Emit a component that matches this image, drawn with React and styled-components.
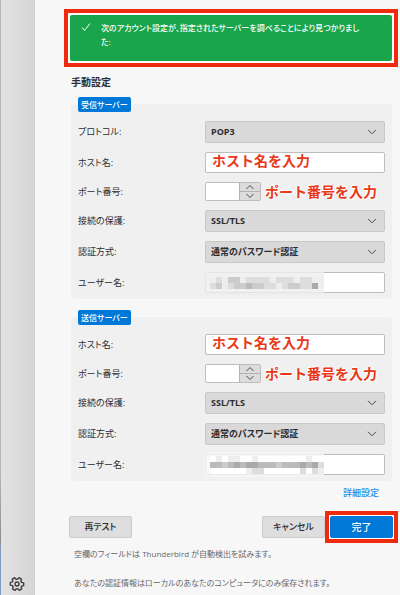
import React, {useId} from 'react';
import styled, {createGlobalStyle} from 'styled-components';

const GlobalStyle = createGlobalStyle`
    * {
        box-sizing: border-box;
    }
    body {
        margin: 0;
        background-color: #f7f7f7;
        color: #2c2c30;
        font-family: "Open Sans", "Noto Sans CJK JP", sans-serif;
        font-size: 9px;
        line-height: 14px;
        font-feature-settings: "palt";
    }
    button, input, select {
        font: inherit;
        font-feature-settings: inherit;
        color: inherit;
        margin: 0;
    }
`;

const Page = styled.div`
    display: flex;
    min-height: 100vh;
`;

const Sidebar = styled.aside`
    display: flex;
    flex-direction: column;
    justify-content: flex-end;
    align-items: center;
    flex: 0 0 35px;
    padding-bottom: 3px;
    border-right: 1px solid #cdcdcd;
    background:
        linear-gradient(#b4b4b4 80%, #8c8c8c 91%, #7f9cc0 92%) left / 1px 100% no-repeat,
        linear-gradient(to right, #e2e2e2, #d6d6d6);
`;

const IconButton = styled.button`
    display: flex;
    padding: 0;
    border: none;
    background: none;
    color: #3e3e42;
`;

const Content = styled.main`
    flex: 1;
    min-width: 0;
    padding: 9px 2px 0 29px;
`;

const Highlight = styled.div`
    padding: ${props => props.$tight ? "1px" : "2px"};
    border: 4px solid #ee2b0c;
    background-color: #fff;
`;

const Notice = styled.div`
    display: flex;
    gap: 10px;
    min-height: 46px;
    padding: 6px 8px 6px 11px;
    border-radius: 2px;
    background-color: #18a54b;
    color: #fff;
`;

const NoticeIcon = styled.svg`
    flex: none;
`;

const NoticeText = styled.p`
    margin: 0;
    font-size: 8px;
    font-weight: 500;
`;

const Form = styled.form`
    padding: 0 6px 0 7px;
`;

const Title = styled.h1`
    margin: 8px 0 15px;
    font-size: 10px;
    line-height: 14px;
`;

const Panel = styled.section`
    display: flex;
    flex-direction: column;
    margin-top: ${props => props.$spaced ? "18px" : "0"};
    padding: 0 7px 6px;
    border-radius: 4px;
    background-color: #f0f0f0;
`;

const Badge = styled.h2`
    align-self: flex-start;
    margin: -7px 0 9px;
    padding: 0 3px;
    border-radius: 2px;
    background-color: #0078d7;
    color: #fff;
    font-size: 8px;
    font-weight: 500;
    line-height: 15px;
`;

const Rows = styled.div`
    display: grid;
    gap: 9px;
`;

const Row = styled.div`
    display: grid;
    grid-template-columns: 127px minmax(0, 1fr);
    align-items: center;
`;

const Control = styled.div`
    position: relative;
    display: flex;
    align-items: center;
`;

const SelectBox = styled.select`
    appearance: none;
    width: 100%;
    height: 22px;
    padding: 0 24px 0 5px;
    border: 1px solid #c9c9c9;
    border-radius: 2px;
    background-color: #d9d9d9;
    font-weight: 700;
`;

const SelectArrow = styled.svg`
    position: absolute;
    right: 8px;
    pointer-events: none;
`;

const TextBox = styled.input`
    width: 100%;
    height: 21px;
    padding: 0 6px;
    border: 1px solid #bdbdbd;
    border-radius: 2px;
    background-color: #fff;
    &::placeholder {
        color: #e83817;
        opacity: 1;
        font-size: 14px;
        font-weight: 700;
        font-feature-settings: normal;
    }
`;

const Spinner = styled.div`
    display: flex;
    flex: 0 0 56px;
    height: 19px;
    border: 1px solid #bdbdbd;
    border-radius: 2px;
    background-color: #fff;
    overflow: hidden;
`;

const PortInput = styled.input`
    flex: 1;
    min-width: 0;
    padding: 0 4px;
    border: none;
    background: none;
`;

const Steps = styled.div`
    display: grid;
    grid-template-rows: 1fr 1fr;
    gap: 1px;
    width: 21px;
    border-left: 1px solid #b4b4b4;
    background-color: #b4b4b4;
`;

const StepButton = styled.button`
    display: flex;
    justify-content: center;
    align-items: center;
    padding: 0;
    border: none;
    background-color: #dcdcdc;
`;

const Hint = styled.span`
    margin-left: 4px;
    color: #e83817;
    font-size: 14px;
    font-weight: 700;
    font-feature-settings: normal;
    white-space: nowrap;
    text-shadow: 0 0 2px #fff, 1px 1px 1px #fff, -1px -1px 1px #fff;
`;

const Mosaic = styled.svg`
    position: absolute;
    left: -1px;
    pointer-events: none;
`;

const LinkRow = styled.div`
    display: flex;
    justify-content: flex-end;
    margin-top: 5px;
    padding-right: 13px;
`;

const Link = styled.a`
    color: #1a8fe8;
    font-weight: 500;
    text-decoration: none;
`;

const Actions = styled.div`
    display: flex;
    align-items: center;
    margin-top: 11px;
    padding-left: 5px;
`;

const Button = styled.button`
    display: block;
    width: 63px;
    height: 22px;
    padding: 0;
    border: 1px solid ${props => props.$primary ? "#0078d7" : "#cbcbcb"};
    border-radius: 2px;
    background-color: ${props => props.$primary ? "#0078d7" : "#dedede"};
    color: ${props => props.$primary ? "#fff" : "#2c2c30"};
    font-size: ${props => props.$primary ? "10px" : "9px"};
    font-weight: 500;
`;

const Spacer = styled.div`
    flex: 1;
`;

const Note = styled.p`
    margin: ${props => props.$spaced ? "15px" : "4px"} 0 0 10px;
    color: #66666a;
    font-size: 8px;
`;

const Chevron = ({up}) => (
    <svg width="10" height="6" viewBox="0 0 10 6" fill="none" stroke="#4a4a4a" aria-hidden="true">
        <path d={up ? "M1.5 5 5 1.5 8.5 5" : "M1.5 1 5 4.5 8.5 1"} />
    </svg>
);

const SelectRow = ({label, options}) => {
    const id = useId();
    return (
        <Row>
            <label htmlFor={id}>{label}</label>
            <Control>
                <SelectBox id={id}>
                    {options.map(option => <option key={option}>{option}</option>)}
                </SelectBox>
                <SelectArrow width="10" height="6" viewBox="0 0 10 6" fill="none" stroke="#4a4a4a" aria-hidden="true">
                    <path d="M1 .8 5 4.8 9 .8" />
                </SelectArrow>
            </Control>
        </Row>
    );
}

const HostRow = () => {
    const id = useId();
    return (
        <Row>
            <label htmlFor={id}>ホスト名:</label>
            <Control><TextBox id={id} type="text" placeholder="ホスト名を入力" /></Control>
        </Row>
    );
}

const PortRow = () => {
    const id = useId();
    return (
        <Row>
            <label htmlFor={id}>ポート番号:</label>
            <Control>
                <Spinner>
                    <PortInput id={id} type="text" inputMode="numeric" />
                    <Steps>
                        <StepButton type="button" aria-label="増やす"><Chevron up /></StepButton>
                        <StepButton type="button" aria-label="減らす"><Chevron /></StepButton>
                    </Steps>
                </Spinner>
                <Hint>ポート番号を入力</Hint>
            </Control>
        </Row>
    );
}

// each string is one line of 6px blocks, a hex digit is the grey level
const UserRow = ({blocks, shade}) => {
    const id = useId();
    const top = (24 - blocks.length * 6) / 2;
    return (
        <Row>
            <label htmlFor={id}>ユーザー名:</label>
            <Control>
                <TextBox id={id} type="text" />
                <Mosaic width="120" height="24" viewBox="0 0 120 24" shapeRendering="crispEdges" aria-hidden="true">
                    <rect width="120" height="24" fill={shade} fillOpacity=".8" />
                    {blocks.map((line, y) => line.split("").map((c, x) => (
                        <rect key={`${x}-${y}`} x={6 + x * 6} y={top + y * 6} width="6" height="6" fill={`#${c}${c}${c}`} />
                    )))}
                </Mosaic>
            </Control>
        </Row>
    );
}

const App = () => (
    <>
        <GlobalStyle />
        <Page>
            <Sidebar>
                <IconButton type="button" aria-label="設定">
                    <svg width="16" height="16" viewBox="0 0 16 16" fill="none" stroke="currentColor" strokeWidth="1.4" strokeLinejoin="round">
                        <path transform="rotate(30 8 8)" d="M6.6 1.5h2.8l.5 2 1.3.8 2-.6 1.4 2.4-1.5 1.4v1l1.5 1.4-1.4 2.4-2-.6-1.3.8-.5 2H6.6l-.5-2-1.3-.8-2 .6-1.4-2.4 1.5-1.4v-1L1.4 6.1l1.4-2.4 2 .6 1.3-.8z" />
                        <circle cx="8" cy="8" r="2" />
                    </svg>
                </IconButton>
            </Sidebar>
            <Content>
                <Highlight>
                    <Notice role="status">
                        <NoticeIcon width="10" height="14" viewBox="0 0 10 14" fill="none" stroke="currentColor" aria-hidden="true">
                            <path d="M1 6.5 3.5 9.5 9 2.5" />
                        </NoticeIcon>
                        <NoticeText>次のアカウント設定が、指定されたサーバーを調べることにより見つかりまし<br />た:</NoticeText>
                    </Notice>
                </Highlight>
                <Form onSubmit={e => e.preventDefault()}>
                    <Title>手動設定</Title>
                    <Panel>
                        <Badge>受信サーバー</Badge>
                        <Rows>
                            <SelectRow label="プロトコル:" options={["POP3", "IMAP"]} />
                            <HostRow />
                            <PortRow />
                            <SelectRow label="接続の保護:" options={["SSL/TLS", "STARTTLS"]} />
                            <SelectRow label="認証方式:" options={["通常のパスワード認証"]} />
                            <UserRow shade="#eeeeee" blocks={["edecceddddedddeddee", "dcedccbccddedccddae"]} />
                        </Rows>
                    </Panel>
                    <Panel $spaced>
                        <Badge>送信サーバー</Badge>
                        <Rows>
                            <HostRow />
                            <PortRow />
                            <SelectRow label="接続の保護:" options={["SSL/TLS", "STARTTLS"]} />
                            <SelectRow label="認証方式:" options={["通常のパスワード認証"]} />
                            <UserRow shade="#f6f6f6" blocks={["fefeeffeffffffffeff", "bbcbabaabbbcbbbabad", "ffffffeddffffffdfde"]} />
                        </Rows>
                    </Panel>
                    <LinkRow><Link href="#advanced">詳細設定</Link></LinkRow>
                </Form>
                <Actions>
                    <Button type="button">再テスト</Button>
                    <Spacer />
                    <Button type="button">キャンセル</Button>
                    <Highlight $tight>
                        <Button type="submit" $primary>完了</Button>
                    </Highlight>
                </Actions>
                <Note>空欄のフィールドは Thunderbird が自動検出を試みます。</Note>
                <Note $spaced>あなたの認証情報はローカルのあなたのコンピュータにのみ保存されます。</Note>
            </Content>
        </Page>
    </>
);

export default App;
